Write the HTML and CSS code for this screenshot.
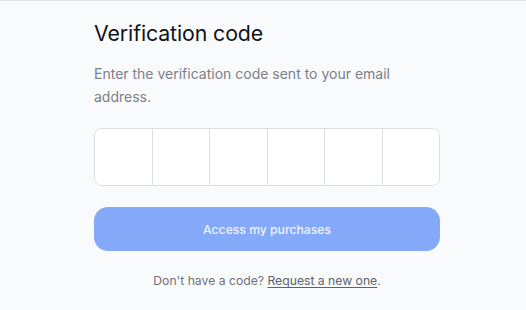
FILE: index.html
```html
<!DOCTYPE html>
<html>
<head>
<meta charset="utf-8">
<link rel="stylesheet" href="styles.css">
</head>
<body>
<main class="page">
  <section class="card">
    <h1 class="title">Verification code</h1>
    <p class="lead">Enter the verification code sent to your email address.</p>
    <div class="code">
      <input class="cell" type="text" maxlength="1">
      <input class="cell" type="text" maxlength="1">
      <input class="cell" type="text" maxlength="1">
      <input class="cell" type="text" maxlength="1">
      <input class="cell" type="text" maxlength="1">
      <input class="cell" type="text" maxlength="1">
    </div>
    <button class="submit" type="button">Access my purchases</button>
    <p class="foot">Don't have a code? <a class="link" href="#">Request a new one</a>.</p>
  </section>
</main>
</body>
</html>
```
FILE: styles.css
```css
html, body {
  margin: 0;
  padding: 0;
}
body {
  background: #f8fafc;
  font-family: "Inter", "Liberation Sans", sans-serif;
  width: 526px;
  height: 310px;
  overflow: hidden;
  border-top: 1px solid #e1e3e7;
  box-sizing: border-box;
}
.page {
  padding: 0 86px 0 94px;
}
.card {
  width: 346px;
  display: flex;
  flex-direction: column;
}
.title {
  margin: 18px 0 0;
  font-size: 21.3px;
  font-weight: 400;
  line-height: 28px;
  color: #111418;
  letter-spacing: -0.1px;
}
.lead {
  margin: 15px 0 0;
  font-size: 14px;
  line-height: 23px;
  color: #7b8089;
  width: 320px;
}
.code {
  margin-top: 20px;
  display: flex;
  height: 58px;
  border: 1px solid #dcdde0;
  border-radius: 8px;
  background: #fff;
  overflow: hidden;
  box-sizing: border-box;
}
.cell {
  flex: 1;
  min-width: 0;
  border: 0;
  border-left: 1px solid #dcdde0;
  background: #fff;
  margin: 0;
  padding: 0;
  outline: none;
}
.cell:first-child {
  border-left: 0;
}
.submit {
  margin-top: 21px;
  height: 44px;
  border: 0;
  border-radius: 14px;
  background: #84a9f9;
  color: #eef3ff;
  font-family: inherit;
  font-size: 12.2px;
  font-weight: 500;
}
.foot {
  margin: 22px 0 0;
  text-align: center;
  font-size: 12.2px;
  color: #6e737b;
}
.link {
  color: #5e636b;
  text-decoration: underline;
  text-underline-offset: 2px;
}
```
